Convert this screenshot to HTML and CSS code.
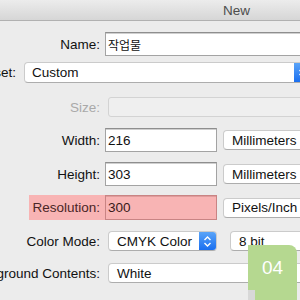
FILE: index.html
```html
<!DOCTYPE html>
<html>
<head>
<meta charset="utf-8">
<link rel="stylesheet" href="styles.css">
</head>
<body>
<div class="window">
  <div class="titlebar"><span class="title">New</span></div>
  <div class="form">
    <div class="row r-name">
      <div class="label">Name:</div>
      <div class="field field-wide">작업물</div>
    </div>
    <div class="row r-preset">
      <div class="label label-preset">Preset:</div>
      <div class="popup popup-preset">
        <span class="ptext">Custom</span>
        <span class="stepper"><svg width="9" height="13" viewBox="0 0 9 13"><path d="M1.5 5 L4.5 2 L7.5 5 M1.5 8 L4.5 11 L7.5 8" fill="none" stroke="#fff" stroke-width="1.4"/></svg></span>
      </div>
    </div>
    <div class="row r-size">
      <div class="label label-dim">Size:</div>
      <div class="disabled"></div>
    </div>
    <div class="row r-width">
      <div class="label">Width:</div>
      <div class="field field-num">216</div>
      <div class="button">Millimeters</div>
    </div>
    <div class="row r-height">
      <div class="label">Height:</div>
      <div class="field field-num">303</div>
      <div class="button">Millimeters</div>
    </div>
    <div class="row r-res">
      <div class="hl">
        <div class="label label-hl">Resolution:</div>
        <div class="field field-num field-hl">300</div>
      </div>
      <div class="button button-res">Pixels/Inch</div>
    </div>
    <div class="row r-mode">
      <div class="label">Color Mode:</div>
      <div class="popup popup-mode">
        <span class="ptext">CMYK Color</span>
        <span class="stepper"><svg width="9" height="13" viewBox="0 0 9 13"><path d="M1.5 5 L4.5 2 L7.5 5 M1.5 8 L4.5 11 L7.5 8" fill="none" stroke="#fff" stroke-width="1.4"/></svg></span>
      </div>
      <div class="popup popup-bit"><span class="ptext">8 bit</span></div>
    </div>
    <div class="row r-bg">
      <div class="label">Background Contents:</div>
      <div class="popup popup-bg"><span class="ptext">White</span></div>
    </div>
  </div>
  <div class="badge">
    <span class="badge-num">04</span>
    <span class="badge-fold"></span>
  </div>
</div>
</body>
</html>
```
FILE: styles.css
```css
* { box-sizing: border-box; }
html, body { margin: 0; padding: 0; }
body {
  width: 300px;
  height: 300px;
  overflow: hidden;
  background: #ececec;
  font-family: "Liberation Sans", Arial, "Noto Sans CJK KR", sans-serif;
  font-size: 13.5px;
  color: #111;
}
.window { position: relative; width: 300px; height: 300px; }
.titlebar {
  height: 21px;
  background: linear-gradient(#ececec, #d6d6d6);
  border-bottom: 1px solid #b1b1b1;
  padding-left: 223px;
  display: flex;
  align-items: center;
}
.title { color: #4d4d4d; font-size: 13.5px; }
.form { display: flex; flex-direction: column; }
.row { display: flex; align-items: center; white-space: nowrap; }
.label {
  width: 100px;
  flex: none;
  display: flex;
  justify-content: flex-end;
  margin-right: 5px;
}
.label-dim { color: #a9a9a9; margin-right: 8px; }
.label-preset { width: 16px; margin-right: 8px; }
.r-name { margin-top: 11px; height: 24px; }
.r-preset { margin-top: 6px; height: 21px; }
.r-size { margin-top: 14px; height: 20px; }
.r-width { margin-top: 11px; height: 24px; }
.r-height { margin-top: 10px; height: 24px; }
.r-res { margin-top: 9px; height: 25px; }
.r-mode { margin-top: 11px; height: 20px; }
.r-bg { margin-top: 12px; height: 20px; }
.field {
  height: 24px;
  background: #fff;
  border: 1px solid #a3a3a3;
  border-top-color: #8e8e8e;
  box-shadow: inset 0 1px 0 #cfcfcf;
  padding-left: 2px;
  display: flex;
  align-items: center;
  flex: none;
}
.field-wide { width: 230px; font-family: "Noto Sans CJK KR", "Liberation Sans", sans-serif; font-size: 12px; }
.field-num { width: 112px; }
.button, .popup {
  height: 20px;
  background: #fff;
  border: 1px solid #cbcbcb;
  border-bottom-color: #adadad;
  border-radius: 4px;
  display: flex;
  align-items: center;
  flex: none;
  overflow: hidden;
}
.button { margin-left: 6px; width: 100px; padding-left: 8px; }
.button-res { margin-left: 6px; }
.popup-preset { height: 21px; width: 288px; }
.ptext { flex: 1; padding-left: 7px; }
.stepper {
  width: 17px;
  height: 100%;
  background: linear-gradient(#5aa4f8, #1a6ff0);
  display: flex;
  align-items: center;
  justify-content: center;
  flex: none;
}
.disabled {
  width: 220px;
  height: 20px;
  background: #efefef;
  border: 1px solid #d3d3d3;
  border-radius: 3px;
  flex: none;
}
.r-mode .label, .r-bg .label { margin-right: 8px; }
.popup-mode { width: 109px; }
.popup-mode .ptext { padding-left: 8px; }
.popup-bit { width: 90px; margin-left: 13px; }
.popup-bit .ptext { padding-left: 8px; }
.popup-bg { width: 220px; }
.popup-bg .ptext { padding-left: 8px; }
.hl {
  margin-left: 29px;
  width: 188px;
  height: 25px;
  background: #f8b4b4;
  display: flex;
  align-items: center;
}
.label-hl { width: 71px; color: #4a2626; }
.field-hl {
  height: 25px;
  background: #f8b4b4;
  border-color: #c98484;
  box-shadow: inset 0 1px 0 #e09c9c;
  color: #3a1a1a;
}
.badge {
  position: absolute;
  left: 248px;
  top: 245px;
  width: 49px;
  height: 55px;
  background: #b5d890;
  border-top-right-radius: 8px;
  display: flex;
  justify-content: center;
  padding-top: 13px;
}
.badge-num {
  color: #fff;
  font-family: "Liberation Sans", Arial, sans-serif;
  font-size: 19px;
  line-height: 19px;
}
.badge-fold {
  position: absolute;
  left: 0;
  bottom: 0;
  width: 7px;
  height: 10px;
  background: #d8d8d8;
}
```
